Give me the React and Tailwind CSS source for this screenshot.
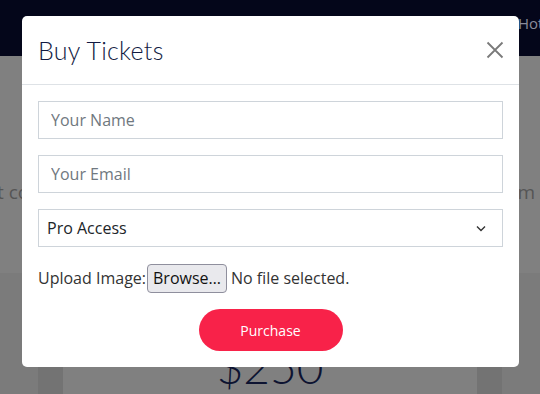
import React from "react";

export default function App() {
  return (
    <div className="relative w-[540px] h-[394px] overflow-hidden bg-[#7b7b7b] font-['Open_Sans',sans-serif]">
      {/* background page (dimmed) */}
      <div className="flex flex-col h-full">
        <div className="h-[56px] bg-[#04061a] flex items-start pt-[12px] pl-[518px] whitespace-nowrap">
          <span className="text-[#8a8c9a] text-[15px]">Hotels</span>
        </div>
        <div className="h-[217px] bg-[#808080] flex items-center justify-between text-[#555] text-[19px] pt-[56px] whitespace-nowrap">
          <span className="ml-[-3px]">t co</span>
          <span className="mr-[5px]">m</span>
        </div>
        <div className="flex-1 flex px-[38px] pt-[40px]">
          <div className="flex-1 bg-[#737373] px-[25px]">
            <div className="h-full bg-[#808080] flex justify-center pt-[31px]">
              <span className="text-[46px] leading-none text-[#0d1331] font-['Lato',sans-serif] font-light">$250</span>
            </div>
          </div>
        </div>
      </div>

      {/* modal */}
      <div className="absolute left-[22px] top-[16px] w-[497px] bg-white rounded-[5px] flex flex-col">
        <div className="flex items-center justify-between px-4 py-4 border-b border-[#dee2e6]">
          <h2 className="text-[25px] leading-[36px] text-[#111a42] font-['Lato',sans-serif] font-light tracking-[0.3px]">Buy Tickets</h2>
          <svg width="18" height="18" viewBox="0 0 18 18" className="mr-[-1px]">
            <path d="M1.5 1.5 L16.5 16.5 M16.5 1.5 L1.5 16.5" stroke="#7a7a7a" strokeWidth="1.8" fill="none" />
          </svg>
        </div>
        <div className="p-4 flex flex-col">
          <input
            className="h-[38px] w-full border border-[#ced4da] px-3 text-[16px] text-[#495057] placeholder:text-[#707880] outline-none"
            placeholder="Your Name"
          />
          <input
            className="mt-4 h-[38px] w-full border border-[#ced4da] px-3 text-[16px] text-[#495057] placeholder:text-[#707880] outline-none"
            placeholder="Your Email"
          />
          <div className="mt-4 h-[38px] w-full border border-[#ced4da] pl-[8px] pr-[16px] flex items-center justify-between text-[16px] text-[#212529]">
            <span>Pro Access</span>
            <svg width="10" height="7" viewBox="0 0 10 7">
              <path d="M1 1.5 L5 5.5 L9 1.5" stroke="#333" strokeWidth="1.4" fill="none" />
            </svg>
          </div>
          <div className="mt-4 h-[30px] flex items-center text-[16px] text-[#333]">
            <span>Upload Image:</span>
            <span className="ml-[1px] h-[29px] px-[5px] flex items-center bg-[#e9e9ed] border border-[#8f8f9d] rounded-[4px] text-[#111]">Browse…</span>
            <span className="ml-[4px]">No file selected.</span>
          </div>
          <div className="mt-4 flex justify-center">
            <button className="w-[144px] h-[42px] rounded-full bg-[#f82249] text-white text-[14px]">Purchase</button>
          </div>
        </div>
      </div>
    </div>
  );
}
